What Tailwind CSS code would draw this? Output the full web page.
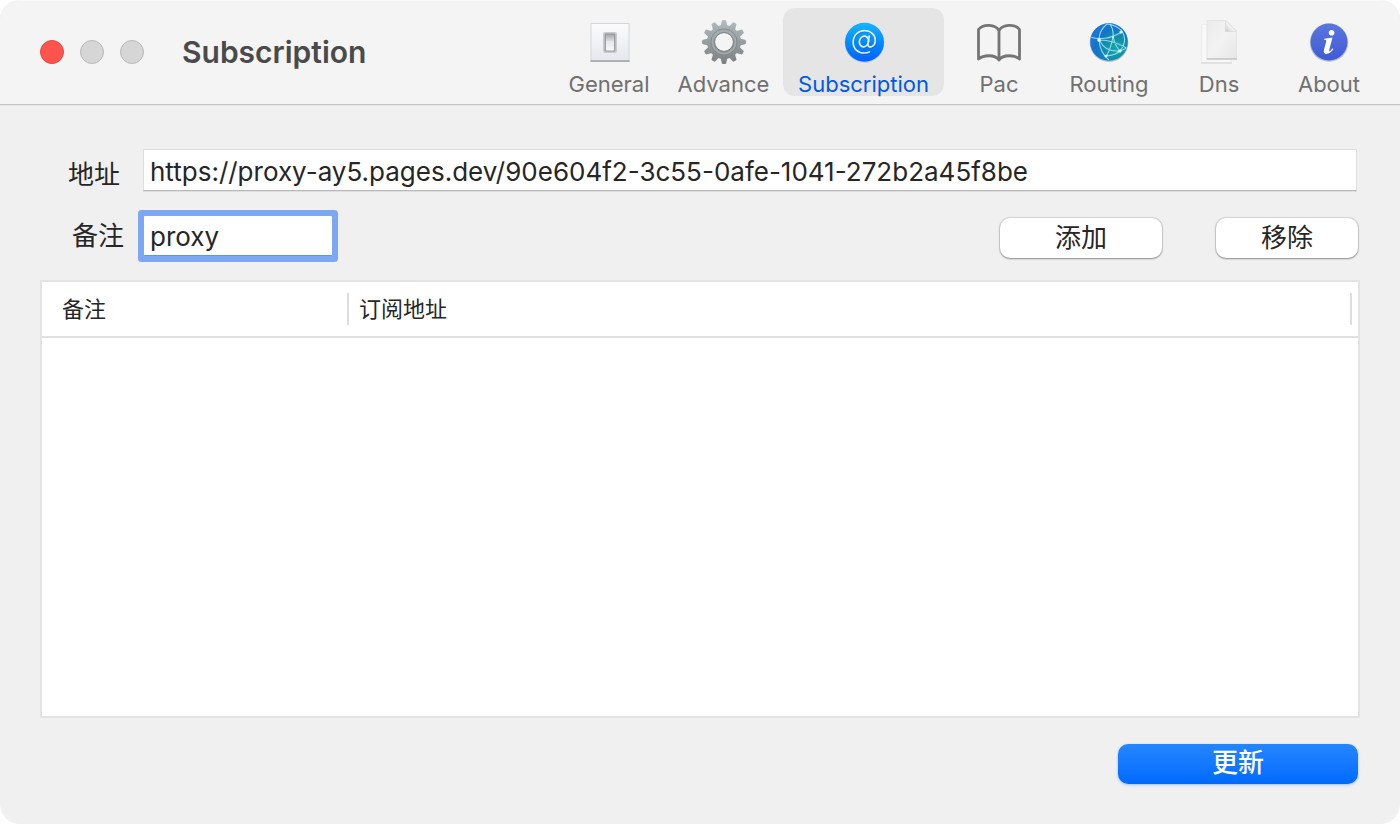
<!DOCTYPE html>
<html lang="zh-CN">
<head>
<meta charset="utf-8">
<meta name="viewport" content="width=device-width, initial-scale=1">
<title>Subscription</title>
<script src="https://cdn.jsdelivr.net/npm/@tailwindcss/browser@4"></script>
</head>
<body class="bg-white font-['Inter','Noto_Sans_CJK_SC',sans-serif] text-[#262626]">
<div class="flex min-h-screen flex-col overflow-hidden rounded-[20px] bg-[#f0f0f0]">
  <header class="flex h-[105px] shrink-0 items-start justify-between border-b border-[#c4c4c4] bg-[#f4f4f4] pr-4 pl-10 shadow-[0_1px_0_#e6e6e6,inset_0_1px_0_#fafafa]">
    <div class="flex h-[104px] items-center">
      <div class="flex gap-4">
        <button aria-label="Close" class="size-6 rounded-full border border-[#e2463f] bg-[#ff544d]"></button>
        <button aria-label="Minimize" class="size-6 rounded-full border border-[#b9b9b9] bg-[#d6d6d6]"></button>
        <button aria-label="Zoom" class="size-6 rounded-full border border-[#b9b9b9] bg-[#d6d6d6]"></button>
      </div>
      <h1 class="ml-[38px] text-[30px] font-semibold whitespace-nowrap text-[#4a4a4a]">Subscription</h1>
    </div>
    <nav class="flex pt-2 text-[22px] leading-9 text-[#707070]">
      <button class="flex h-[88px] w-[110px] flex-col items-center pt-2.5">
        <svg class="h-12 w-12 shrink-0" viewBox="0 0 48 48">
          <defs>
            <linearGradient id="plate" x2="0" y2="1"><stop stop-color="#fcfcfd"/><stop offset="1" stop-color="#e4e7ed"/></linearGradient>
            <linearGradient id="knob" x2="0" y2="1"><stop stop-color="#a2a3a6"/><stop offset=".38" stop-color="#d8d9dc"/><stop offset=".42" stop-color="#e6e7eb"/><stop offset="1" stop-color="#f8f9fc"/></linearGradient>
          </defs>
          <rect x="6" y="5.500" width="38" height="38" fill="url(#plate)" stroke="#d3d5d9"/>
          <path d="M5.500 43h39" stroke="#9fa1a6" stroke-width="1.400"/>
          <rect x="18" y="14" width="14" height="21" rx="2" fill="#c9cbcf"/>
          <rect x="20.300" y="16" width="9.400" height="17" rx=".6" fill="url(#knob)" stroke="#97989c" stroke-width="1.200"/>
        </svg>
        <span>General</span>
      </button>
      <button class="flex h-[88px] w-[119px] flex-col items-center pt-2.5">
        <svg class="h-12 w-12 shrink-0" viewBox="0 0 48 48">
          <defs>
            <linearGradient id="steel" gradientUnits="userSpaceOnUse" x1="0" y1="2" x2="0" y2="46"><stop stop-color="#b0bdc2"/><stop offset=".5" stop-color="#969da0"/><stop offset="1" stop-color="#7d8082"/></linearGradient>
            <path id="tooth" d="M20.600 8L22 2.300Q24 1.600 26 2.300L27.400 8Z"/>
            <mask id="teeth"><g fill="#fff">
              <circle cx="24" cy="24" r="17"/>
              <use href="#tooth"/><use href="#tooth" transform="rotate(30 24 24)"/><use href="#tooth" transform="rotate(60 24 24)"/><use href="#tooth" transform="rotate(90 24 24)"/><use href="#tooth" transform="rotate(120 24 24)"/><use href="#tooth" transform="rotate(150 24 24)"/><use href="#tooth" transform="rotate(180 24 24)"/><use href="#tooth" transform="rotate(210 24 24)"/><use href="#tooth" transform="rotate(240 24 24)"/><use href="#tooth" transform="rotate(270 24 24)"/><use href="#tooth" transform="rotate(300 24 24)"/><use href="#tooth" transform="rotate(330 24 24)"/></g>
              <circle cx="24" cy="24" r="9" fill="#000"/>
            </mask>
          </defs>
          <rect width="48" height="48" fill="url(#steel)" mask="url(#teeth)"/>
          <circle cx="24" cy="24" r="13" fill="none" stroke="#828a8e" stroke-width="1"/>
          <circle cx="24" cy="24" r="11.500" fill="none" stroke="#a3abae" stroke-width="1.500"/>
          <circle cx="24" cy="24" r="9.500" fill="none" stroke="#7f8689" stroke-width="1"/>
        </svg>
        <span>Advance</span>
      </button>
      <button aria-current="page" class="flex h-[88px] w-[161px] flex-col items-center rounded-xl bg-[#e5e5e5] pt-2.5 text-[#0059e6]">
        <svg class="h-12 w-12 shrink-0" viewBox="0 0 48 48">
          <defs><linearGradient id="mail" x2="0" y2="1"><stop stop-color="#16b5fc"/><stop offset=".55" stop-color="#0086ff"/><stop offset="1" stop-color="#0061ff"/></linearGradient></defs>
          <circle cx="24.500" cy="24.900" r="19.800" fill="#c9cdd1"/>
          <circle cx="24.500" cy="24.300" r="19.500" fill="url(#mail)"/>
          <g fill="none" stroke-linecap="round">
            <g transform="translate(.5 .8)" stroke="#0a55b8" stroke-width="1.700" opacity=".55"><ellipse cx="24" cy="23.500" rx="4.500" ry="5.400" transform="rotate(18 24 23.500)"/><path d="M29.300 18L27.900 26.200C27.600 30.800 35.300 29.600 35.300 22.200C35.300 16.400 30.600 12.700 24.600 12.700C18 12.700 13.200 17.600 13.200 24.200C13.200 30.800 17.700 35 24.300 35Q27.100 35 29.400 34"/></g>
            <g stroke="#e9edf1" stroke-width="1.700"><ellipse cx="24" cy="23.500" rx="4.500" ry="5.400" transform="rotate(18 24 23.500)"/><path d="M29.300 18L27.900 26.200C27.600 30.800 35.300 29.600 35.300 22.200C35.300 16.400 30.600 12.700 24.600 12.700C18 12.700 13.200 17.600 13.200 24.200C13.200 30.800 17.700 35 24.300 35Q27.100 35 29.400 34"/></g>
          </g>
        </svg>
        <span>Subscription</span>
      </button>
      <button class="flex h-[88px] w-[110px] flex-col items-center pt-2.5">
        <svg class="h-12 w-12 shrink-0" viewBox="0 0 48 48" fill="none" stroke="#747474" stroke-width="2.800" stroke-linejoin="round" stroke-linecap="round">
          <path d="M24 12.500C20.500 6 8 5.500 3.500 11.500V41C8 37 20 36 24 42C28 36 40 37 44.500 41V11.500C40 5.500 27.500 6 24 12.500V41.500"/>
        </svg>
        <span>Pac</span>
      </button>
      <button class="flex h-[88px] w-[110px] flex-col items-center pt-2.5">
        <svg class="h-12 w-12 shrink-0" viewBox="0 0 48 48">
          <defs>
            <radialGradient id="sea" cx=".68" cy=".66" r=".8"><stop stop-color="#14a5a5"/><stop offset=".4" stop-color="#138cae"/><stop offset=".65" stop-color="#1273cc"/><stop offset=".85" stop-color="#1a78dc"/><stop offset="1" stop-color="#1a58b0"/></radialGradient>
            <clipPath id="ball"><circle cx="24" cy="24" r="18.500"/></clipPath>
          </defs>
          <circle cx="24" cy="24.600" r="19.300" fill="#b9bec3"/>
          <circle cx="24" cy="24" r="18.800" fill="url(#sea)"/>
          <g clip-path="url(#ball)" fill="none" stroke="#a9e8f3" stroke-width="1.100" opacity=".85">
            <path d="M5 19Q20 24 37 14M14 22Q14 12 23 5M14 22Q15 35 24 42M14 22Q29 22 43 31M21 39Q26 30 28 19Q29 12 25 6M28 18Q30 28 35 33M37 13Q43 23 35 33Q31 37 21 38M15 23Q20 34 35 33M37 13Q31 7 22 6M35 33L42 30"/>
          </g>
          <g fill="#dfffff"><circle cx="14" cy="22" r="1.800"/><circle cx="36" cy="14" r="1.600"/><circle cx="35" cy="33" r="1.600"/><circle cx="21" cy="38" r="1.500"/><circle cx="28" cy="19" r="1"/></g>
        </svg>
        <span>Routing</span>
      </button>
      <button class="flex h-[88px] w-[110px] flex-col items-center pt-2.5">
        <svg class="h-12 w-12 shrink-0" viewBox="0 0 48 48">
          <defs>
            <linearGradient id="paper" x1="0" y1="0" x2="1" y2="1"><stop stop-color="#eaeaea"/><stop offset=".5" stop-color="#f3f3f3"/><stop offset="1" stop-color="#e6e6e6"/></linearGradient>
            <linearGradient id="fold" x1="0" y1="1" x2="1" y2="0"><stop stop-color="#c8c8c8"/><stop offset=".5" stop-color="#fafafa"/><stop offset="1" stop-color="#fff"/></linearGradient>
          </defs>
          <path d="M6.500 6.500H36V44.500H6.500Z" fill="#f8f8f8" stroke="#ececec"/>
          <path d="M6 45h31" stroke="#d2d2d2" stroke-width="1"/>
          <path d="M12 2.500H31L41.500 13V40.500H12Z" fill="url(#paper)" stroke="#e4e4e4"/>
          <path d="M11.500 41h30.500" stroke="#bdbdbd" stroke-width="1.300"/>
          <path d="M30.500 2.500L41.500 13.500H30.500Z" fill="url(#fold)" stroke="#d8d8d8" stroke-width=".7"/>
        </svg>
        <span>Dns</span>
      </button>
      <button class="flex h-[88px] w-[110px] flex-col items-center pt-2.5">
        <svg class="h-12 w-12 shrink-0" viewBox="0 0 48 48">
          <defs><linearGradient id="info" x2="0" y2="1"><stop stop-color="#5a76dd"/><stop offset="1" stop-color="#3f5bd6"/></linearGradient></defs>
          <circle cx="24" cy="24.600" r="19.200" fill="#b9bcc8"/>
          <circle cx="24" cy="24" r="18.400" fill="url(#info)"/>
          <circle cx="26.600" cy="14.700" r="2.800" fill="#fff"/>
          <path d="M19.300 20.700L27.500 19.500L24.300 31.800Q23.900 33.800 25.200 32.900L27.600 30.300L28.400 31.100C26.300 34.400 23.800 36 21.500 36C19 36 18.400 34.200 19 31.800L21.300 23.200Q21.700 21.800 19.200 21.800Z" fill="#fff"/>
        </svg>
        <span>About</span>
      </button>
    </nav>
  </header>

  <main class="flex flex-1 flex-col px-10 pt-11 pb-10">
    <div class="flex h-[43px] items-start pr-[3px]">
      <label for="address" class="w-[103px] pt-1.5 pl-7 text-[26px] leading-10">地址</label>
      <input id="address" type="text" value="https://proxy-ay5.pages.dev/90e604f2-3c55-0afe-1041-272b2a45f8be" class="h-[42px] min-w-0 flex-1 border border-[#dedede] border-b-[#b9b9b9] bg-white px-1.5 pt-0.5 text-[26px] shadow-[0_1px_0_#dedede] outline-none">
    </div>
    <div class="mt-6 flex h-10 items-start">
      <label for="remark" class="w-[104px] pl-8 text-[26px] leading-10">备注</label>
      <input id="remark" type="text" value="proxy" class="h-10 w-[188px] rounded-[1px] border-b border-[#6592dc] bg-white px-1.5 pt-0.5 text-[26px] shadow-[0_0_0_6px_#7ba7f3] outline-none">
      <div class="mt-0.5 mr-0.5 ml-auto flex gap-[54px]">
        <button class="h-10 w-[162px] rounded-[10px] bg-white text-[26px] leading-9 shadow-[0_0_1px_1px_#0000001c,0_1px_2px_#00000055]">添加</button>
        <button class="h-10 w-[142px] rounded-[10px] bg-white text-[26px] leading-9 shadow-[0_0_1px_1px_#0000001c,0_1px_2px_#00000055]">移除</button>
      </div>
    </div>
    <div class="mt-6 flex-1 border-2 border-[#e3e3e3] bg-white">
      <table class="w-full table-fixed border-collapse text-left text-[22px] leading-8">
        <thead>
          <tr class="h-[55px] border-b-2 border-[#e0e0e0]">
            <th scope="col" class="w-[307px] p-0 font-normal"><div class="border-r-2 border-[#dedede] pl-5">备注</div></th>
            <th scope="col" class="p-0 pr-1.5 font-normal"><div class="border-r-2 border-[#dedede] pl-2.5">订阅地址</div></th>
          </tr>
        </thead>
        <tbody></tbody>
      </table>
    </div>
    <button class="mt-[26px] mr-0.5 h-10 w-60 self-end rounded-[10px] bg-linear-to-b from-[#2486ff] to-[#006aff] pb-0.5 text-[26px] leading-9 font-medium text-white shadow-[0_1px_3px_#006aff55]">更新</button>
  </main>
</div>
</body>
</html>
